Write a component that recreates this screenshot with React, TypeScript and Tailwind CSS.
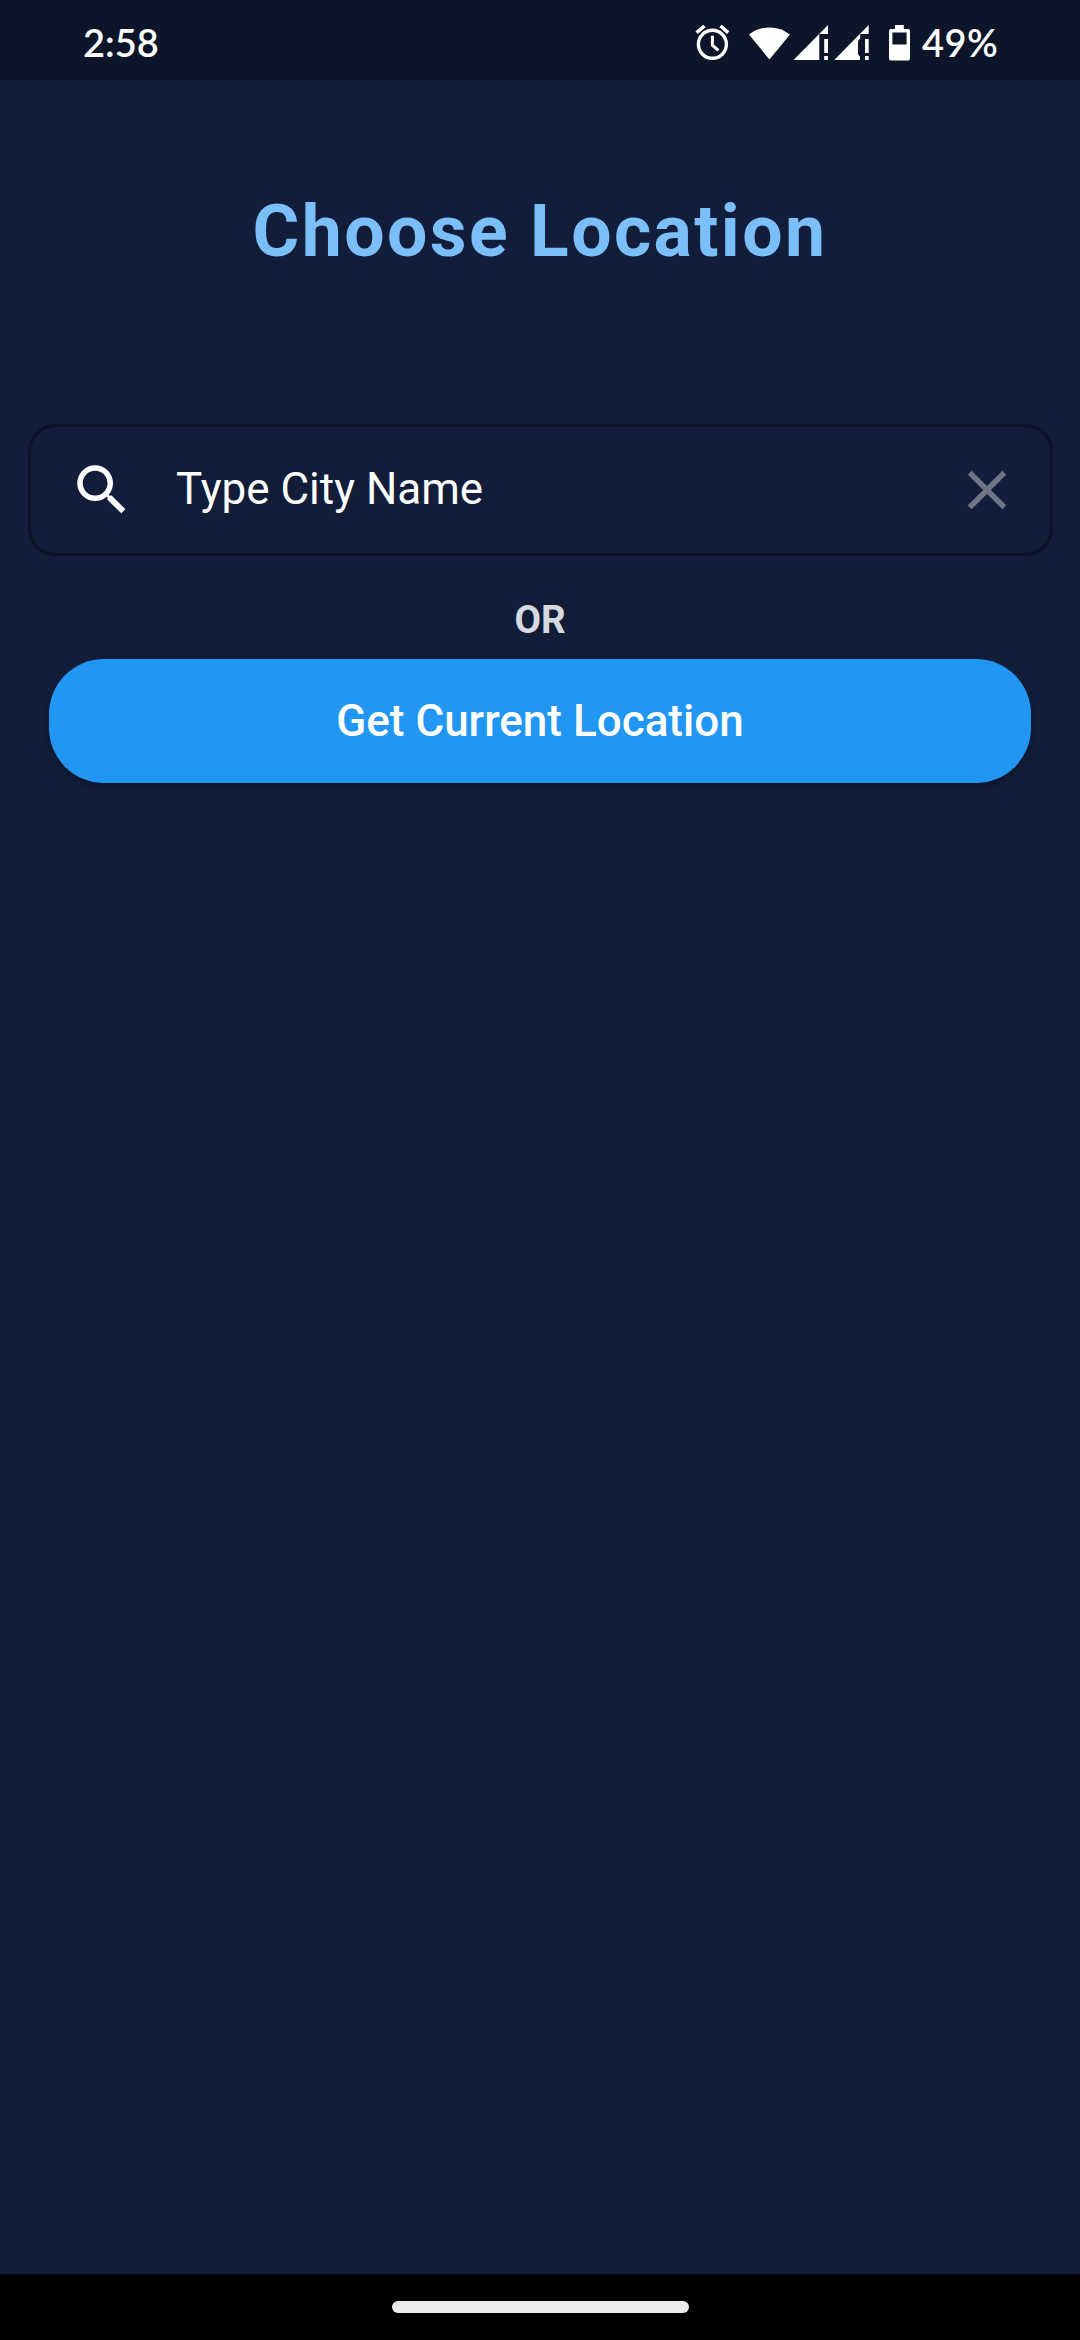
function StatusIcons() {
  return (
    <svg className="block h-[80px] w-[220px] shrink-0 text-white" viewBox="694 0 220 80" fill="currentColor">
      <circle cx="712.4" cy="44.3" r="14" fill="none" stroke="currentColor" strokeWidth="3.4" />
      <path d="M696.6 32.6 704.4 26M728.2 32.6 720.4 26" stroke="currentColor" strokeWidth="3.6" />
      <path d="M712.4 35.8V45.2L718.4 50.3" fill="none" stroke="currentColor" strokeWidth="3" />
      <path d="M769.4 59.5 749 34.4A33.5 33.5 0 0 1 790 34.4Z" />
      <path d="M793.5 60 828 25V34H819.3V60ZM824.2 39H828V53H824.2ZM824.2 56H828V60H824.2Z" />
      <path d="M834.2 60 868.7 25V34H860.4L860 39Q858 39.5 858 42V53Q858 56 860 56.5V60ZM865 39H868.7V53H865ZM865 56H868.7V60H865Z" />
      <path
        fillRule="evenodd"
        d="M895 25H903.8V29H908A2 2 0 0 1 910 31V58.6A2 2 0 0 1 908 60.6H891A2 2 0 0 1 889 58.6V31A2 2 0 0 1 891 29H895ZM892.4 32.4V44.4H906.6V32.4Z"
      />
    </svg>
  );
}

function StatusBar() {
  return (
    <header className="flex h-[80px] shrink-0 bg-[#0d152b] pl-[83px] font-['Lato',sans-serif] text-[38px] leading-[84px] font-semibold text-white">
      <span className="w-[611px] shrink-0">2:58</span>
      <StatusIcons />
      <span className="ml-[8px] tracking-[0.5px]">49%</span>
    </header>
  );
}

function SearchField() {
  return (
    <div className="mx-[27.5px] mt-[143.5px] flex h-[132px] items-center rounded-[27.5px] border-[3px] border-[#0b1327] pr-[29.5px] pl-[38px] text-[44px] text-white">
      <svg className="size-[66px] shrink-0" viewBox="0 0 24 24" fill="currentColor">
        <path d="M15.5 14h-.79l-.28-.27A6.471 6.471 0 0 0 16 9.5 6.5 6.5 0 1 0 9.5 16c1.61 0 3.09-.59 4.23-1.57l.27.28v.79l5 4.99L20.49 19l-4.99-5zm-6 0C7.01 14 5 11.99 5 9.5S7.01 5 9.5 5 14 7.01 14 9.5 11.99 14 9.5 14z" />
      </svg>
      <span className="ml-[41.5px] flex-1 pb-[1px] leading-none">Type City Name</span>
      <svg className="size-[66px] shrink-0 text-[#6e7587]" viewBox="0 0 24 24" fill="currentColor">
        <path d="M19 6.41 17.59 5 12 10.59 6.41 5 5 6.41 10.59 12 5 17.59 6.41 19 12 13.41 17.59 19 19 17.59 13.41 12z" />
      </svg>
    </div>
  );
}

export default function App() {
  return (
    <div className="flex h-[2340px] w-[1080px] flex-col overflow-hidden bg-[#121d3a] font-['Roboto',sans-serif]">
      <StatusBar />
      <main className="flex flex-1 flex-col">
        <h1 className="mt-[104px] text-center text-[71.5px] leading-[96px] font-bold tracking-[2.4px] text-[#7abff9]">
          Choose Location
        </h1>
        <SearchField />
        <p className="mt-[40px] text-center text-[38.5px] leading-[48px] font-bold text-[#d7dadf]">OR</p>
        <button className="mx-[49px] mt-[15.5px] h-[124px] rounded-[55px] bg-[#2196f3] text-[44px] font-medium text-white shadow-[0_4px_7px_rgba(0,0,0,0.25)]">
          Get Current Location
        </button>
      </main>
      <footer className="flex h-[66px] shrink-0 justify-center bg-black pt-[27px]">
        <div className="h-[12px] w-[297px] rounded-full bg-[#ebebeb]" />
      </footer>
    </div>
  );
}
